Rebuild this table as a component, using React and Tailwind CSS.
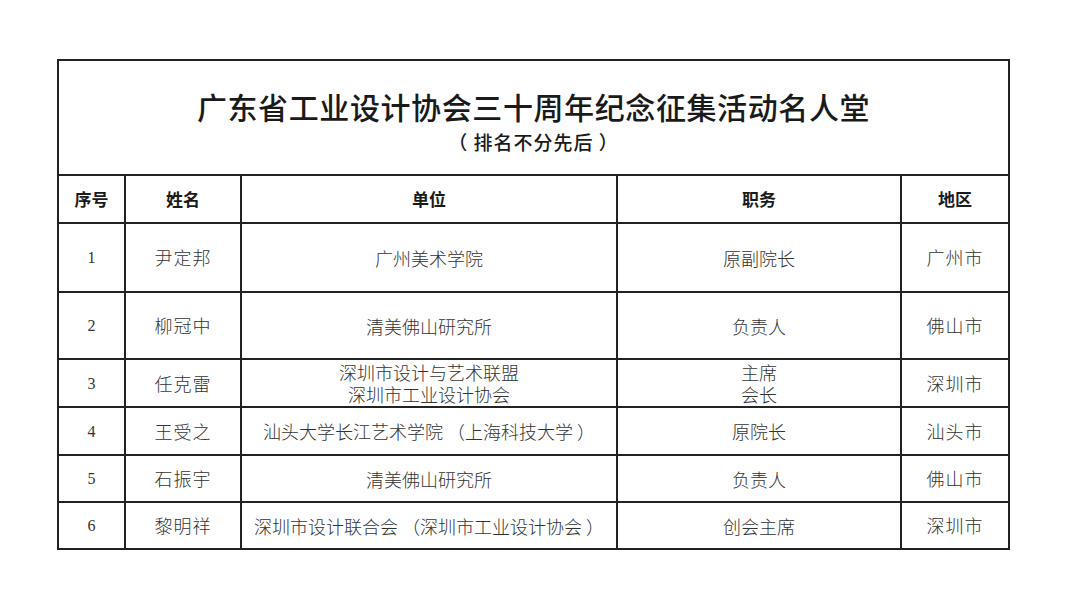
import React from 'react';

const rows = [
  { no: '1', name: '尹定邦', org: ['广州美术学院'], title: ['原副院长'], area: '广州市', h: 'h-[69px]' },
  { no: '2', name: '柳冠中', org: ['清美佛山研究所'], title: ['负责人'], area: '佛山市', h: 'h-[67px]' },
  { no: '3', name: '任克雷', org: ['深圳市设计与艺术联盟', '深圳市工业设计协会'], title: ['主席', '会长'], area: '深圳市', h: 'h-[48px]' },
  { no: '4', name: '王受之', org: ['汕头大学长江艺术学院 （上海科技大学 ）'], title: ['原院长'], area: '汕头市', h: 'h-[48px]' },
  { no: '5', name: '石振宇', org: ['清美佛山研究所'], title: ['负责人'], area: '佛山市', h: 'h-[47px]' },
  { no: '6', name: '黎明祥', org: ['深圳市设计联合会 （深圳市工业设计协会 ）'], title: ['创会主席'], area: '深圳市', h: 'h-[47px]' },
];

const cell = 'border-2 border-[#222] text-center align-middle p-0';

export default function App() {
  return (
    <div className="w-[1080px] h-[608px] bg-white pt-[59px] pl-[57px] font-['Liberation_Serif','Noto_Sans_CJK_SC',serif] text-[#333]">
      <table className="table-fixed border-collapse w-[951px]">
        <colgroup>
          <col className="w-[67px]" />
          <col className="w-[116px]" />
          <col className="w-[376px]" />
          <col className="w-[284px]" />
          <col className="w-[108px]" />
        </colgroup>
        <tbody>
          <tr className="h-[115px]">
            <td colSpan={5} className={cell}>
              <div className="flex flex-col items-center pt-[6px] font-['Noto_Sans_CJK_SC',sans-serif] text-[#1a1a1a]">
                <div className="text-[30px] leading-[40px] font-medium tracking-[0.6px]">广东省工业设计协会三十周年纪念征集活动名人堂</div>
                <div className="text-[19px] leading-[28px] font-medium mt-[2px] tracking-[1px]">（ 排名不分先后 ）</div>
              </div>
            </td>
          </tr>
          <tr className="h-[48px] font-['Noto_Sans_CJK_SC',sans-serif] font-bold text-[17px] text-[#1a1a1a]">
            <td className={cell}>序号</td>
            <td className={cell}>姓名</td>
            <td className={cell}>单位</td>
            <td className={cell}>职务</td>
            <td className={cell}>地区</td>
          </tr>
          {rows.map((r) => (
            <tr key={r.no} className={r.h + ' text-[18px]'}>
              <td className={cell}><span className="font-['Liberation_Serif',serif] text-[16px]">{r.no}</span></td>
              <td className={cell + " font-['Noto_Sans_CJK_SC',sans-serif] font-light tracking-[1px]"}>{r.name}</td>
              <td className={cell + " font-['Noto_Sans_CJK_SC',sans-serif] font-light leading-[22px]"}>
                {r.org.map((o) => <div key={o} className="whitespace-pre">{o}</div>)}
              </td>
              <td className={cell + " font-['Noto_Sans_CJK_SC',sans-serif] font-light leading-[22px]"}>
                {r.title.map((t) => <div key={t}>{t}</div>)}
              </td>
              <td className={cell + " font-['Noto_Sans_CJK_SC',sans-serif] font-light tracking-[1px]"}>{r.area}</td>
            </tr>
          ))}
        </tbody>
      </table>
    </div>
  );
}
